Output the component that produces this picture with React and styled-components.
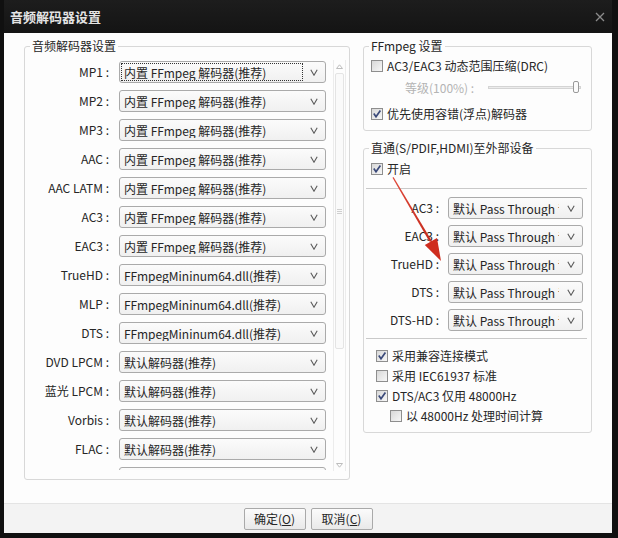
import React from 'react'
import styled, { createGlobalStyle } from 'styled-components'

const GlobalStyle = createGlobalStyle`
  html, body {
    margin:0;
    padding:0;
    background:#0f0f0f;
  }
  body {
    font-family:"Noto Sans CJK SC", "Noto Sans", sans-serif;
    font-size:12px;
    color:#262626;
  }
  * { box-sizing:border-box; }
`

const leftRows = [
  ['MP1', '内置 FFmpeg 解码器(推荐)'],
  ['MP2', '内置 FFmpeg 解码器(推荐)'],
  ['MP3', '内置 FFmpeg 解码器(推荐)'],
  ['AAC', '内置 FFmpeg 解码器(推荐)'],
  ['AAC LATM', '内置 FFmpeg 解码器(推荐)'],
  ['AC3', '内置 FFmpeg 解码器(推荐)'],
  ['EAC3', '内置 FFmpeg 解码器(推荐)'],
  ['TrueHD', 'FFmpegMininum64.dll(推荐)'],
  ['MLP', 'FFmpegMininum64.dll(推荐)'],
  ['DTS', 'FFmpegMininum64.dll(推荐)'],
  ['DVD LPCM', '默认解码器(推荐)'],
  ['蓝光 LPCM', '默认解码器(推荐)'],
  ['Vorbis', '默认解码器(推荐)'],
  ['FLAC', '默认解码器(推荐)'],
  ['', ''],
]

const passRows = ['AC3', 'EAC3', 'TrueHD', 'DTS', 'DTS-HD']

const Chevron = () => (
  <svg width="8" height="7" viewBox="0 0 8 7">
    <path d="M0.8 0.8 L4 6.2 L7.2 0.8" fill="none" stroke="#5a5a5a" strokeWidth="1.1" />
  </svg>
)

const Select = ({ value, width, focused }) => (
  <SelectBox $width={width}>
    <SelectText $focused={focused}>{value}</SelectText>
    <SelectArrow><Chevron /></SelectArrow>
  </SelectBox>
)

const Checkbox = ({ checked, label, indent }) => (
  <CheckRow $indent={indent}>
    <Box>
      {checked && (
        <svg width="10" height="10" viewBox="0 0 10 10">
          <path d="M1.8 4.6 L4 7.8 L8.4 1.6" fill="none" stroke="#3b4a7a" strokeWidth="1.7" />
        </svg>
      )}
    </Box>
    <span>{label}</span>
  </CheckRow>
)

const App = () => {
  return (
    <>
      <GlobalStyle />
      <Window>
        <TitleBar>
          <span>音频解码器设置</span>
          <svg width="10" height="10" viewBox="0 0 10 10">
            <path d="M1 1 L9 9 M9 1 L1 9" stroke="#8c8c8c" strokeWidth="1.3" />
          </svg>
        </TitleBar>

        <Body>
          <Main>
            <Group>
              <Legend>音频解码器设置</Legend>
              <DecoderInner>
                <ScrollArea>
                  {leftRows.map(([name, value], i) => (
                    <DecoderRow key={i}>
                      <RowLabel>{name ? name + ' :' : ''}</RowLabel>
                      <Select value={value} width={207} focused={i === 0} />
                    </DecoderRow>
                  ))}
                </ScrollArea>
                <Scrollbar>
                  <ScrollBtn>
                    <svg width="7" height="5" viewBox="0 0 7 5"><path d="M0.5 4.5 L3.5 0.8 L6.5 4.5 Z" fill="none" stroke="#bdbdbd" /></svg>
                  </ScrollBtn>
                  <Track>
                    <Thumb>
                      <Grip />
                    </Thumb>
                  </Track>
                  <ScrollBtn>
                    <svg width="7" height="5" viewBox="0 0 7 5"><path d="M0.5 0.5 L3.5 4.2 L6.5 0.5 Z" fill="none" stroke="#bdbdbd" /></svg>
                  </ScrollBtn>
                </Scrollbar>
              </DecoderInner>
            </Group>

            <RightColumn>
              <Group>
                <Legend>FFmpeg 设置</Legend>
                <FfmpegInner>
                  <Checkbox label="AC3/EAC3 动态范围压缩(DRC)" />
                  <SliderRow>
                    <SliderLabel>等级(100%) :</SliderLabel>
                    <SliderTrack>
                      <SliderThumb />
                    </SliderTrack>
                  </SliderRow>
                  <Spaced $top={6}>
                    <Checkbox checked label="优先使用容错(浮点)解码器" />
                  </Spaced>
                </FfmpegInner>
              </Group>

              <Group>
                <Legend>直通(S/PDIF,HDMI)至外部设备</Legend>
                <PassInner>
                  <Checkbox checked label="开启" />
                  <Separator $top={9} />
                  <PassList>
                    {passRows.map((name) => (
                      <PassRow key={name}>
                        <PassLabel>{name} :</PassLabel>
                        <Select value="默认 Pass Through 音频" width={135} />
                      </PassRow>
                    ))}
                  </PassList>
                  <Separator $top={0} />
                  <OptionList>
                    <Checkbox checked label="采用兼容连接模式" />
                    <Checkbox label="采用 IEC61937 标准" />
                    <Checkbox checked label="DTS/AC3 仅用 48000Hz" />
                    <Checkbox indent label="以 48000Hz 处理时间计算" />
                  </OptionList>
                </PassInner>
              </Group>
            </RightColumn>
          </Main>

          <Footer>
            <Button>确定(<u>O</u>)</Button>
            <Button>取消(<u>C</u>)</Button>
          </Footer>
        </Body>

        <Arrow width="618" height="538" viewBox="0 0 618 538">
          <defs>
            <linearGradient id="red" x1="0" y1="0" x2="1" y2="1">
              <stop offset="0" stopColor="#e0493a" />
              <stop offset="1" stopColor="#c52a1c" />
            </linearGradient>
          </defs>
          <polygon points="392.5,177.7 393.5,177.1 432.6,242.3 429.2,241.3" fill="url(#red)" />
          <polygon points="441,261 424.8,245 437,238" fill="#cf2d1e" />
        </Arrow>
      </Window>
    </>
  )
}

const Window = styled.div`
  position:relative;
  width:618px;
  height:538px;
  display:flex;
  flex-direction:column;
  padding:0 6px 5px 4px;
  background:#101010;
`

const TitleBar = styled.div`
  height:33px;
  flex-shrink:0;
  display:flex;
  align-items:center;
  justify-content:space-between;
  padding:0 7px 0 6px;
  color:#e4e4e4;
  font-size:13px;
  font-weight:700;
  background:linear-gradient(#1d1d1d, #141414);
`

const Body = styled.div`
  flex:1;
  display:flex;
  flex-direction:column;
  background:#fdfdfd;
`

const Main = styled.div`
  flex:1;
  display:grid;
  grid-template-columns:326px 229px;
  column-gap:13px;
  align-items:start;
  padding:5px 0 0 20px;
`

const Group = styled.fieldset`
  margin:0;
  padding:0;
  min-width:0;
  border:1px solid #d8d8d8;
  border-radius:3px;
`

const Legend = styled.legend`
  margin-left:5px;
  padding:0 2px;
  font-size:12px;
  line-height:16px;
  color:#262626;
`

const DecoderInner = styled.div`
  display:flex;
  gap:1px;
  padding:7px 3px 8px 0;
`

const ScrollArea = styled.div`
  width:308px;
  height:409px;
  overflow:hidden;
  display:flex;
  flex-direction:column;
  gap:7px;
`

const DecoderRow = styled.div`
  display:flex;
  align-items:center;
  gap:10px;
  flex-shrink:0;
`

const RowLabel = styled.div`
  width:84px;
  text-align:right;
  white-space:nowrap;
  line-height:16px;
`

const SelectBox = styled.div`
  width:${(p) => p.$width}px;
  height:22px;
  flex-shrink:0;
  display:flex;
  align-items:center;
  padding:1px 0 1px 1px;
  border:1px solid #aaaaaa;
  border-radius:3px;
  background:linear-gradient(#fbfbfb, #f0f0f0);
`

const SelectText = styled.div`
  flex:1;
  height:18px;
  line-height:17px;
  padding-left:2px;
  overflow:hidden;
  white-space:nowrap;
  color:#262626;
  border:1px ${(p) => (p.$focused ? 'dotted #333' : 'solid transparent')};
`

const SelectArrow = styled.div`
  width:22px;
  display:flex;
  justify-content:center;
  align-items:center;
`

const Scrollbar = styled.div`
  width:13px;
  height:411px;
  margin-top:-1px;
  display:flex;
  flex-direction:column;
  border-left:1px solid #ececec;
  border-right:1px solid #ececec;
`

const ScrollBtn = styled.div`
  height:12px;
  display:flex;
  align-items:center;
  justify-content:center;
`

const Track = styled.div`
  flex:1;
  padding:0 1px;
`

const Thumb = styled.div`
  height:276px;
  margin-top:1px;
  border:1px solid #e4e4e4;
  border-radius:2px;
  background:#fafafa;
  display:flex;
  align-items:center;
  justify-content:center;
`

const Grip = styled.div`
  width:5px;
  height:5px;
  border-top:1px solid #cfcfcf;
  border-bottom:1px solid #cfcfcf;
  position:relative;
  &::after {
    content:'';
    position:absolute;
    left:0;
    right:0;
    top:1px;
    border-top:1px solid #cfcfcf;
  }
`

const RightColumn = styled.div`
  display:flex;
  flex-direction:column;
  gap:9px;
`

const FfmpegInner = styled.div`
  padding:2px 0 6px 7px;
`

const CheckRow = styled.div`
  height:20px;
  display:flex;
  align-items:center;
  gap:4px;
  padding-left:${(p) => (p.$indent ? 14 : 0)}px;
  white-space:nowrap;
  line-height:16px;
`

const Box = styled.div`
  width:12px;
  height:12px;
  flex-shrink:0;
  display:flex;
  align-items:center;
  justify-content:center;
  border:1px solid #8e8e8e;
  background:linear-gradient(135deg, #d8d8d8, #f7f7f7);
`

const SliderRow = styled.div`
  height:22px;
  display:flex;
  align-items:center;
  padding-left:34px;
`

const SliderLabel = styled.span`
  width:83px;
  color:#b4b4b4;
  white-space:nowrap;
`

const SliderTrack = styled.div`
  width:93px;
  height:3px;
  border:1px solid #d4d4d4;
  background:#ececec;
  display:flex;
  align-items:center;
  justify-content:flex-end;
  padding-right:1px;
`

const SliderThumb = styled.div`
  width:6px;
  height:12px;
  flex-shrink:0;
  border:1px solid #9a9a9a;
  border-radius:2px;
  background:#fbfbfb;
`

const Spaced = styled.div`
  margin-top:${(p) => p.$top}px;
`

const PassInner = styled.div`
  padding:3px 0 6px 0;
  & > ${CheckRow} {
    margin-left:7px;
  }
`

const Separator = styled.div`
  height:1px;
  margin:${(p) => p.$top}px 4px 0 2px;
  background:#c9c9c9;
`

const PassList = styled.div`
  display:flex;
  flex-direction:column;
  gap:6px;
  padding:8px 0 7px;
`

const PassRow = styled.div`
  display:flex;
  align-items:center;
  gap:9px;
`

const PassLabel = styled.div`
  width:75px;
  text-align:right;
  white-space:nowrap;
  line-height:16px;
`

const OptionList = styled.div`
  padding:7px 0 0 12px;
`

const Footer = styled.div`
  height:30px;
  flex-shrink:0;
  display:flex;
  align-items:center;
  justify-content:center;
  gap:5px;
  border-top:1px solid #e4e4e4;
  background:#f3f3f3;
`

const Button = styled.div`
  width:62px;
  height:22px;
  display:flex;
  align-items:center;
  justify-content:center;
  border:1px solid #a9a9a9;
  border-radius:2px;
  background:linear-gradient(#fbfbfb, #e9e9e9);
  color:#262626;
  line-height:16px;
`

const Arrow = styled.svg`
  position:absolute;
  left:0;
  top:0;
  pointer-events:none;
`

export default App
